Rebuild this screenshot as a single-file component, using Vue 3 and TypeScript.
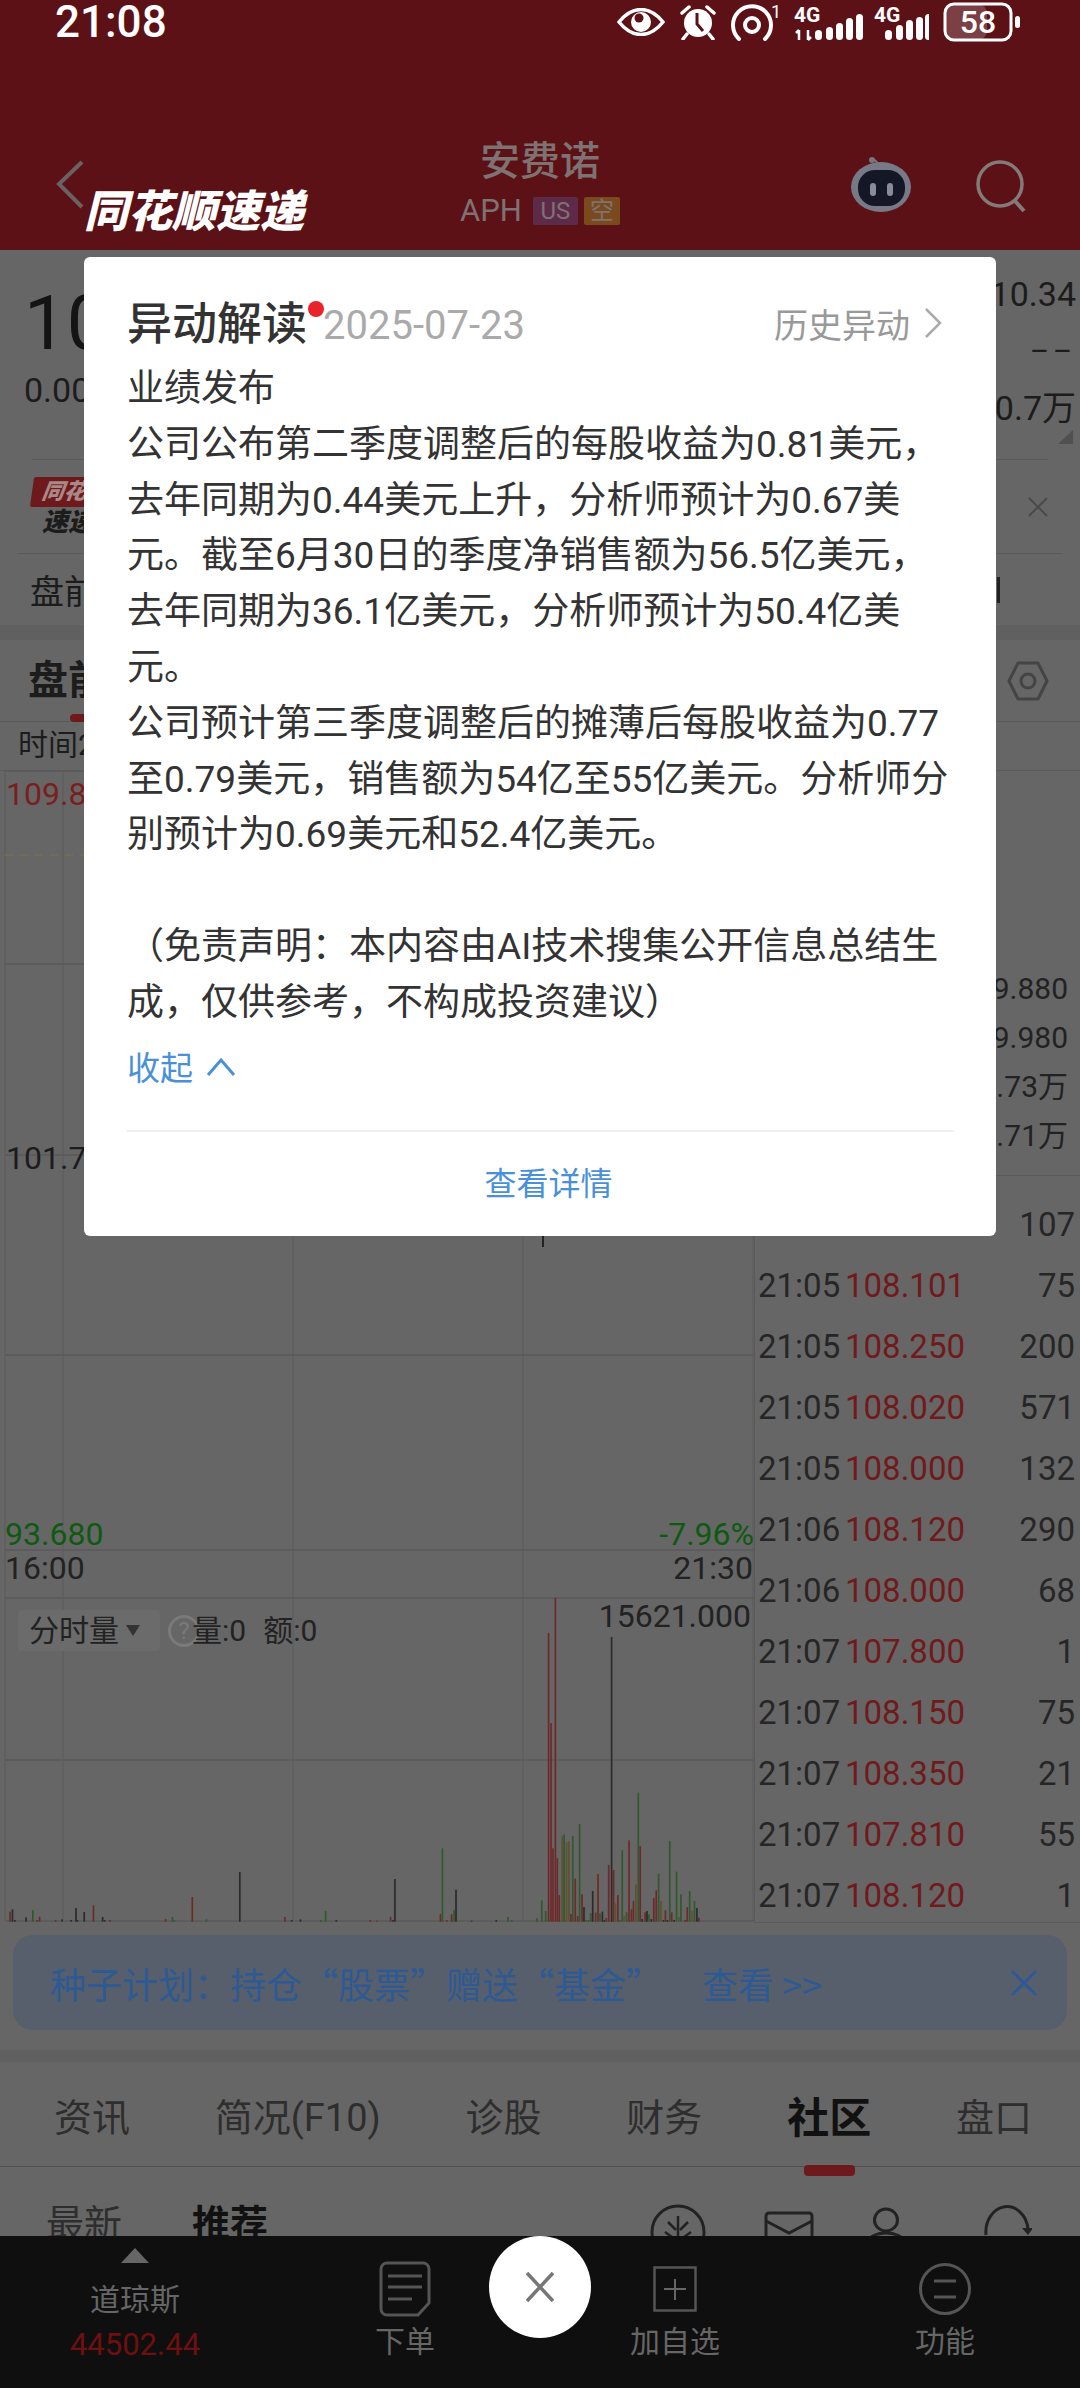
<template>
  <div class="screen">
    <header class="top">
      <div class="status">
        <span class="clock">21:08</span>
        <div class="status-icons">
          <svg width="48" height="28" viewBox="0 0 48 28">
            <path d="M2 14C10 4 17 1.500 24 1.500S38 4 46 14C38 24 31 26.500 24 26.500S10 24 2 14z" fill="none" stroke="#fff" stroke-width="3.500" />
            <circle cx="24" cy="14" r="10" fill="#fff" />
            <circle cx="22" cy="10" r="4.500" fill="#5c1116" />
          </svg>
          <svg width="38" height="36" viewBox="0 0 38 36">
            <circle cx="19" cy="19" r="14" fill="#fff" />
            <path d="M18 9v11l6 7" fill="none" stroke="#5c1116" stroke-width="3" />
            <path d="M3 9l7-6M35 9l-7-6M8 30l-4 5M30 30l4 5" stroke="#fff" stroke-width="3.500" stroke-linecap="round" />
          </svg>
          <svg width="49" height="38" viewBox="0 0 49 38">
            <path d="M8 36A19 19 0 1 1 34 36" fill="none" stroke="#fff" stroke-width="4" stroke-linecap="round" />
            <circle cx="21" cy="22" r="7" fill="none" stroke="#fff" stroke-width="4" />
            <text x="40" y="15" class="sv-small">1</text>
          </svg>
          <svg width="135" height="40" viewBox="0 0 135 40">
            <text x="0" y="20" class="sv-net">4G</text>
            <path d="M5 28v10M2 31l3-3M14 28v10M14 38l3-3" fill="none" stroke="#fff" stroke-width="2.500" />
            <rect v-for="b in signalA" :key="'a' + b.x" :x="b.x" :y="38 - b.h" width="7" :height="b.h" rx="3.500" fill="#fff" />
            <text x="80" y="20" class="sv-net">4G</text>
            <rect v-for="b in signalB" :key="'b' + b.x" :x="b.x" :y="38 - b.h" width="7" :height="b.h" rx="3.500" fill="#fff" />
          </svg>
          <svg width="78" height="40" viewBox="0 0 78 40">
            <rect x="2" y="2" width="42" height="36" rx="9" fill="#fff" fill-opacity="0.2" />
            <rect x="2" y="2" width="66" height="36" rx="9" fill="none" stroke="#fff" stroke-width="3" />
            <text x="35" y="31" text-anchor="middle" class="sv-batt">58</text>
            <rect x="72" y="14" width="5" height="12" rx="2.500" fill="#fff" />
          </svg>
        </div>
      </div>
      <div class="nav">
        <svg class="back" width="30" height="50" viewBox="0 0 30 50">
          <path d="M27 2L4 24l23 23" fill="none" stroke="#6a6262" stroke-width="4" />
        </svg>
        <div class="stock">
          <div class="stock-name">安费诺</div>
          <div class="stock-code">
            <span>APH</span>
            <span class="tag tag-us">US</span>
            <span class="tag tag-short">空</span>
          </div>
        </div>
        <div class="nav-right">
          <svg class="robot" width="62" height="58" viewBox="0 0 62 58">
            <path d="M28 8c-1-4-4-6-6-5" fill="none" stroke="#777" stroke-width="2" />
            <circle cx="22" cy="3" r="3" fill="#777" />
            <ellipse cx="31" cy="30" rx="30" ry="25" fill="#777a86" />
            <rect x="8" y="13" width="47" height="36" rx="17" fill="#141826" />
            <rect x="20" y="26" width="6" height="13" rx="3" fill="#8a8d97" />
            <rect x="37" y="26" width="6" height="13" rx="3" fill="#8a8d97" />
          </svg>
          <svg width="54" height="54" viewBox="0 0 54 54">
            <circle cx="24" cy="24" r="22" fill="none" stroke="#857a7a" stroke-width="3.500" />
            <path d="M39 41l9 10" stroke="#857a7a" stroke-width="4" />
          </svg>
        </div>
      </div>
    </header>

    <section class="quote">
      <div class="quote-left">
        <div class="price-big">108.12</div>
        <div class="price-sub">0.000 0.00%</div>
      </div>
      <div class="quote-right">
        <div>110.34</div>
        <div class="quote-dash">––</div>
        <div>10.7万</div>
        <svg class="corner" width="15" height="14" viewBox="0 0 15 14"><path d="M15 0v14H0z" fill="#505050" /></svg>
      </div>
    </section>

    <section class="ad">
      <div class="ad-logo">
        <span class="ad-flag">同花顺</span>
        <span class="ad-name">速递</span>
      </div>
      <svg width="20" height="20" viewBox="0 0 20 20"><path d="M1 1l18 18M19 1L1 19" stroke="#4a4a4a" stroke-width="2" /></svg>
    </section>

    <section class="pre">
      <span>盘前交易</span>
      <i class="pre-bar"></i>
    </section>

    <div class="band"></div>

    <section class="chart-tabs">
      <span class="chart-tab">盘前分时</span>
      <svg width="42" height="40" viewBox="0 0 42 40">
        <path d="M11 2h20l9 18-9 18H11L2 20z" fill="none" stroke="#444" stroke-width="3" stroke-linejoin="round" />
        <circle cx="21" cy="20" r="7" fill="none" stroke="#444" stroke-width="3" />
      </svg>
    </section>

    <div class="time-bar">时间2025-07-23</div>

    <section class="main">
      <div class="chart">
        <svg class="chart-svg" width="754" height="1152" viewBox="0 0 754 1152">
          <line v-for="x in gridX" :key="'x' + x" :x1="x" y1="0" :x2="x" y2="1150" stroke="#5a5a5a" />
          <line v-for="y in gridY" :key="'y' + y" x1="5" :y1="y" x2="754" :y2="y" stroke="#5a5a5a" stroke-width="1.500" />
          <line x1="5" y1="84" x2="754" y2="84" stroke="#7b6c55" stroke-width="1.500" stroke-dasharray="8 7" />
          <line x1="543" y1="450" x2="543" y2="476" stroke="#222" stroke-width="2" />
          <rect v-for="(b, i) in bars" :key="i" :x="b.x" :y="b.y" width="1.700" :height="b.h" :fill="barColors[b.c]" />
        </svg>
        <span class="lbl lbl-high">109.880</span>
        <span class="lbl lbl-mid">101.780</span>
        <span class="lbl lbl-low">93.680</span>
        <span class="lbl lbl-pct">-7.96%</span>
        <span class="lbl lbl-start">16:00</span>
        <span class="lbl lbl-end">21:30</span>
        <span class="lbl lbl-max">15621.000</span>
        <div class="vol-head">
          <span class="vol-select">分时量<i class="vol-caret"></i></span>
          <span class="vol-help">?</span>
          <span>量:0</span>
          <span class="vol-amount">额:0</span>
        </div>
      </div>
      <div class="side">
        <div class="side-stats">
          <div>109.880</div>
          <div>109.980</div>
          <div>1.73万</div>
          <div>1.71万</div>
        </div>
        <div v-for="(r, i) in ticks" :key="i" class="tick">
          <span class="tick-time">{{ r.time }}</span>
          <span class="tick-price">{{ r.price }}</span>
          <span class="tick-qty">{{ r.qty }}</span>
        </div>
      </div>
    </section>

    <section class="banner">
      <span>种子计划：持仓“股票”赠送“基金”</span>
      <span class="banner-link">查看 &gt;&gt;</span>
      <svg class="banner-close" width="28" height="28" viewBox="0 0 28 28"><path d="M2 2l24 24M26 2L2 26" stroke="#2d5a94" stroke-width="3" /></svg>
    </section>

    <div class="band band-low"></div>

    <nav class="tabs">
      <span v-for="t in tabs" :key="t" class="tab" :class="{ active: t === '社区' }">{{ t }}</span>
    </nav>

    <section class="sub">
      <span class="sub-tab">最新</span>
      <span class="sub-tab sub-active">推荐</span>
      <svg class="sub-icons" width="382" height="64" viewBox="0 0 382 64">
        <circle cx="28" cy="28" r="26" fill="none" stroke="#222" stroke-width="3" />
        <path d="M28 12v36M18 18l8 8M15 28l11 8M38 18l-8 8M41 28l-11 8" fill="none" stroke="#222" stroke-width="2.500" />
        <rect x="116" y="9" width="46" height="50" rx="3" fill="none" stroke="#222" stroke-width="3" />
        <path d="M116 17l23 12 23-12" fill="none" stroke="#222" stroke-width="3" />
        <ellipse cx="236" cy="16" rx="11.500" ry="11" fill="none" stroke="#222" stroke-width="3" />
        <path d="M218 38c2-12 34-12 36 0" fill="none" stroke="#222" stroke-width="3" />
        <path d="M336 31A20 24 0 1 1 378 25" fill="none" stroke="#222" stroke-width="3" />
        <path d="M372 24h11l-5 7z" fill="#222" />
      </svg>
    </section>

    <footer class="bar">
      <div class="bar-item">
        <svg class="index-arrow" width="28" height="15" viewBox="0 0 28 15"><path d="M14 0l14 15H0z" fill="#666" /></svg>
        <span class="index-name">道琼斯</span>
        <span class="index-value">44502.44</span>
      </div>
      <div class="bar-item">
        <svg width="52" height="56" viewBox="0 0 52 56">
          <path d="M8 2h36a6 6 0 0 1 6 6v34l-11 12H8a6 6 0 0 1-6-6V8a6 6 0 0 1 6-6z" fill="none" stroke="#555" stroke-width="3" />
          <path d="M9 15h34M9 26h34M9 38h24" stroke="#555" stroke-width="3" />
        </svg>
        <span class="bar-label">下单</span>
      </div>
      <div class="bar-item">
        <svg width="56" height="56" viewBox="0 0 56 56">
          <rect x="7.500" y="6.500" width="41" height="43" fill="none" stroke="#555" stroke-width="2.500" />
          <path d="M28 18v21M17 28h22" stroke="#666" stroke-width="2" />
        </svg>
        <span class="bar-label">加自选</span>
      </div>
      <div class="bar-item">
        <svg width="56" height="56" viewBox="0 0 56 56">
          <circle cx="28" cy="28" r="24.500" fill="none" stroke="#555" stroke-width="3" />
          <path d="M17 20h22M17 36h22" stroke="#555" stroke-width="3" />
        </svg>
        <span class="bar-label">功能</span>
      </div>
    </footer>

    <div class="logo">同花顺速递</div>

    <div class="modal">
      <div class="modal-head">
        <span class="modal-title">异动解读<i class="modal-dot"></i></span>
        <span class="modal-date">2025-07-23</span>
        <span class="modal-history">
          历史异动
          <svg width="18" height="32" viewBox="0 0 18 32"><path d="M2 2l14 14L2 30" fill="none" stroke="#aaa" stroke-width="2.500" /></svg>
        </span>
      </div>
      <div class="modal-body">
        <div v-for="(line, i) in lines" :key="i" class="modal-line">{{ line || '\u00a0' }}</div>
      </div>
      <div class="modal-fold">
        收起
        <svg width="30" height="22" viewBox="0 0 30 22"><path d="M2 20L15 5l13 15" fill="none" stroke="#4a90d9" stroke-width="3" /></svg>
      </div>
      <div class="modal-foot">查看详情</div>
    </div>

    <button class="close-btn" type="button">
      <svg width="30" height="32" viewBox="0 0 30 32"><path d="M2 2l26 28M28 2L2 30" stroke="#777" stroke-width="3.500" /></svg>
    </button>
  </div>
</template>

<script setup lang="ts">
interface SignalBar {
  x: number
  h: number
}

interface Tick {
  time: string
  price: string
  qty: number
}

type BarColor = 'r' | 'g' | 'k' | 'o'

const signalA: SignalBar[] = [
  { x: 21, h: 10 },
  { x: 32, h: 13 },
  { x: 42, h: 17 },
  { x: 52, h: 22 },
  { x: 62, h: 26 }
]
const signalB: SignalBar[] = [
  { x: 91, h: 10 },
  { x: 102, h: 15 },
  { x: 112, h: 20 },
  { x: 122, h: 23 },
  { x: 131, h: 26 }
]

const gridX = [5, 63, 293, 523, 753]
const gridY = [0, 193, 384, 584, 779, 827, 989, 1150]

const barColors: Record<BarColor, string> = {
  r: '#6e2a2a',
  g: '#32592e',
  k: '#2c2c2c',
  o: '#5e5230'
}

// x and top as read off the zoomed crop of the volume area
const rawBars: [number, number, BarColor][] = [
  [19, 395, 'r'], [24, 388, 'k'], [29, 420, 'k'], [52, 412, 'k'], [66, 390, 'g'], [75, 420, 'r'], [80, 410, 'r'],
  [113, 420, 'r'], [126, 418, 'k'], [145, 420, 'k'], [155, 384, 'k'], [158, 420, 'k'], [172, 396, 'k'], [191, 376, 'r'],
  [210, 411, 'k'], [214, 420, 'k'], [225, 420, 'r'], [340, 417, 'r'], [354, 411, 'g'], [358, 420, 'g'], [395, 351, 'r'],
  [424, 418, 'g'], [493, 276, 'k'], [586, 411, 'r'], [600, 420, 'k'], [618, 418, 'k'], [660, 420, 'g'], [670, 393, 'g'],
  [692, 420, 'k'], [762, 420, 'r'], [776, 422, 'r'], [804, 411, 'r'], [809, 420, 'k'], [813, 297, 'k'], [907, 402, 'r'],
  [911, 205, 'g'], [920, 420, 'r'], [930, 403, 'r'], [935, 390, 'g'], [939, 329, 'k'], [971, 422, 'k'], [1022, 420, 'k'],
  [1046, 411, 'g'], [1054, 420, 'g'], [1106, 414, 'g'], [1116, 361, 'g'], [1124, 393, 'g'],
  [1130, -441, 'r'], [1135, -171, 'r'], [1139, 205, 'r'], [1144, -546, 'r'], [1148, 235, 'r'], [1152, 345, 'r'],
  [1158, 167, 'o'], [1162, 163, 'g'], [1167, 187, 'o'], [1172, 183, 'o'], [1176, 402, 'r'], [1180, 168, 'g'],
  [1185, 296, 'r'], [1190, 408, 'r'], [1194, 132, 'g'], [1199, 343, 'r'], [1203, 381, 'k'], [1208, 420, 'g'],
  [1213, 420, 'g'], [1217, 400, 'g'], [1221, 333, 'k'], [1227, 398, 'r'], [1232, 282, 'r'], [1236, 400, 'g'],
  [1241, 395, 'k'], [1245, 420, 'k'], [1249, 414, 'r'], [1254, 255, 'r'], [1260, -429, 'k'], [1264, 270, 'r'],
  [1268, 370, 'o'], [1273, 345, 'r'], [1278, 420, 'g'], [1282, 211, 'g'], [1286, 408, 'o'], [1291, 397, 'g'],
  [1296, 181, 'r'], [1301, 388, 'r'], [1305, 363, 'r'], [1310, 313, 'o'], [1315, 38, 'g'], [1319, 198, 'r'],
  [1323, 417, 'k'], [1329, 397, 'r'], [1333, 393, 'k'], [1337, 403, 'g'], [1342, 417, 'k'], [1347, 354, 'r'],
  [1352, 331, 'r'], [1357, 281, 'g'], [1362, 363, 'o'], [1367, 420, 'k'], [1371, 391, 'r'], [1375, 420, 'k'],
  [1380, 183, 'g'], [1384, 397, 'r'], [1389, 420, 'k'], [1394, 275, 'g'], [1399, 411, 'o'], [1403, 343, 'g'],
  [1412, 420, 'r'], [1416, 381, 'r'], [1421, 333, 'g'], [1426, 393, 'o'], [1431, 363, 'g'], [1436, 384, 'k'],
  [1440, 413, 'r']
]

const bars = rawBars.map(([zx, ztop, c]) => {
  const top = 1780 + ztop / 3
  return { x: zx / 2.063, y: top - 771, h: 1921.7 - top, c }
})

const ticks: Tick[] = [
  { time: '21:04', price: '108.100', qty: 107 },
  { time: '21:05', price: '108.101', qty: 75 },
  { time: '21:05', price: '108.250', qty: 200 },
  { time: '21:05', price: '108.020', qty: 571 },
  { time: '21:05', price: '108.000', qty: 132 },
  { time: '21:06', price: '108.120', qty: 290 },
  { time: '21:06', price: '108.000', qty: 68 },
  { time: '21:07', price: '107.800', qty: 1 },
  { time: '21:07', price: '108.150', qty: 75 },
  { time: '21:07', price: '108.350', qty: 21 },
  { time: '21:07', price: '107.810', qty: 55 },
  { time: '21:07', price: '108.120', qty: 1 }
]

const tabs = ['资讯', '简况(F10)', '诊股', '财务', '社区', '盘口']

const lines = [
  '业绩发布',
  '公司公布第二季度调整后的每股收益为0.81美元，',
  '去年同期为0.44美元上升，分析师预计为0.67美',
  '元。截至6月30日的季度净销售额为56.5亿美元，',
  '去年同期为36.1亿美元，分析师预计为50.4亿美',
  '元。',
  '公司预计第三季度调整后的摊薄后每股收益为0.77',
  '至0.79美元，销售额为54亿至55亿美元。分析师分',
  '别预计为0.69美元和52.4亿美元。',
  '',
  '（免责声明：本内容由AI技术搜集公开信息总结生',
  '成，仅供参考，不构成投资建议）'
]
</script>

<style scoped>
.screen {
  position: relative;
  width: 1080px;
  height: 2388px;
  overflow: hidden;
  background: #666;
  color: #1c1c1c;
  font-family: Roboto, "Noto Sans CJK SC", sans-serif;
}

.top {
  height: 250px;
  background: #5c1116;
}

.status {
  display: flex;
  align-items: center;
  justify-content: space-between;
  height: 44px;
  padding: 0 59px 0 55px;
  color: #fff;
}

.clock {
  font-size: 44px;
  font-weight: 500;
  line-height: 44px;
}

.status-icons {
  display: flex;
  align-items: center;
  gap: 14px;
}

.sv-small {
  fill: #fff;
  font-size: 18px;
  font-family: Roboto, sans-serif;
}

.sv-net {
  fill: #fff;
  font-size: 21px;
  font-weight: 700;
  font-family: Roboto, sans-serif;
}

.sv-batt {
  fill: #fff;
  font-size: 32px;
  font-weight: 500;
  font-family: Roboto, sans-serif;
}

.nav {
  display: grid;
  grid-template-columns: 1fr auto 1fr;
  align-items: start;
  height: 206px;
  padding-top: 96px;
  box-sizing: border-box;
}

.back {
  margin: 20px 0 0 55px;
}

.stock {
  display: flex;
  flex-direction: column;
  align-items: center;
}

.stock-name {
  font-size: 40px;
  line-height: 44px;
  font-weight: 500;
  color: #7e7272;
}

.stock-code {
  display: flex;
  align-items: center;
  gap: 6px;
  margin-top: 12px;
  font-size: 31px;
  line-height: 30px;
  color: #7e7272;
}

.tag {
  width: 36px;
  height: 28px;
  font-size: 24px;
  line-height: 28px;
  text-align: center;
  border-radius: 2px;
}

.tag-us {
  width: 45px;
  margin-left: 5px;
  background: #5e2a4a;
}

.tag-short {
  background: #7a4a1c;
}

.nav-right {
  display: flex;
  align-items: flex-start;
  gap: 64px;
  justify-content: flex-end;
  padding-right: 50px;
  margin-top: 20px;
}

.robot {
  margin-top: -3px;
}

.quote {
  display: flex;
  justify-content: space-between;
  height: 209px;
}

.quote-left {
  padding: 28px 0 0 24px;
}

.price-big {
  font-size: 76px;
  line-height: 90px;
  color: #141414;
}

.price-sub {
  font-size: 34px;
  line-height: 44px;
}

.quote-right {
  padding: 16px 4px 0 0;
  font-size: 34px;
  line-height: 57px;
  text-align: right;
}

.quote-dash {
  font-size: 29px;
  letter-spacing: 4px;
}

.corner {
  display: block;
  margin: -7px 3px 0 auto;
}

.ad {
  display: flex;
  align-items: center;
  justify-content: space-between;
  height: 94px;
  box-sizing: border-box;
  margin: 0 32px;
  border-top: 1px solid #5a5a5a;
}

.ad-logo {
  display: flex;
  flex-direction: column;
  font-style: italic;
  font-weight: 900;
  line-height: 30px;
  font-size: 22px;
}

.ad-flag {
  padding: 0 10px;
  background: #6e1a1c;
  color: #a88;
  border-radius: 2px;
  transform: skewX(-8deg);
}

.ad-name {
  padding-left: 10px;
  font-size: 26px;
}

.pre {
  display: flex;
  align-items: center;
  justify-content: space-between;
  height: 72px;
  box-sizing: border-box;
  margin: 0 18px;
  padding: 0 62px 0 12px;
  border-top: 1px solid #5a5a5a;
  font-size: 34px;
}

.pre-bar {
  width: 3px;
  height: 26px;
  background: #222;
}

.band {
  height: 15px;
  background: #606060;
}

.band-low {
  height: 12px;
  margin-top: 20px;
}

.chart-tabs {
  display: flex;
  align-items: center;
  justify-content: space-between;
  height: 82px;
  box-sizing: border-box;
  padding: 0 31px 0 28px;
  border-bottom: 1px solid #5a5a5a;
}

.chart-tab {
  position: relative;
  font-size: 40px;
  font-weight: 700;
  line-height: 82px;
}

.chart-tab::after {
  content: "";
  position: absolute;
  left: 42px;
  bottom: 0;
  width: 50px;
  height: 8px;
  border-radius: 4px;
  background: #6e1a1c;
}

.time-bar {
  height: 49px;
  box-sizing: border-box;
  padding-left: 18px;
  border-bottom: 1px solid #5a5a5a;
  font-size: 30px;
  line-height: 46px;
}

.main {
  display: flex;
  height: 1152px;
}

.chart {
  position: relative;
  flex: 0 0 754px;
}

.chart-svg {
  display: block;
}

.lbl {
  position: absolute;
  font-size: 32px;
  line-height: 36px;
  white-space: nowrap;
}

.lbl-high {
  left: 6px;
  top: 5px;
  color: #7a1e20;
}

.lbl-mid {
  left: 6px;
  top: 369px;
}

.lbl-low {
  left: 5px;
  top: 745px;
  color: #0e5a10;
}

.lbl-pct {
  right: 0;
  top: 745px;
  color: #0e5a10;
}

.lbl-start {
  left: 5px;
  top: 779px;
  color: #222;
}

.lbl-end {
  right: 1px;
  top: 779px;
  color: #222;
}

.lbl-max {
  right: 3px;
  top: 827px;
  color: #222;
}

.vol-head {
  position: absolute;
  left: 18px;
  top: 839px;
  display: flex;
  align-items: center;
  font-size: 30px;
  line-height: 41px;
  color: #222;
}

.vol-select {
  display: flex;
  align-items: center;
  width: 142px;
  height: 41px;
  box-sizing: border-box;
  padding-left: 11px;
  border-radius: 4px;
  background: #6b6b6b;
}

.vol-caret {
  margin-left: 7px;
  border: 7px solid transparent;
  border-top: 11px solid #333;
  border-bottom: 0;
}

.vol-help {
  width: 26px;
  height: 26px;
  margin: 0 -8px 0 8px;
  border: 3px solid #7a7a7a;
  border-radius: 50%;
  font-size: 24px;
  line-height: 26px;
  text-align: center;
  color: #7a7a7a;
}

.vol-amount {
  margin-left: 17px;
}

.side {
  flex: 1;
  height: 1152px;
  overflow: hidden;
  box-sizing: border-box;
  border-left: 1px solid #5a5a5a;
  border-bottom: 1px solid #5a5a5a;
}

.side-stats {
  padding: 193px 12px 15px 0;
  border-bottom: 1px solid #5a5a5a;
  margin-bottom: 18px;
  font-size: 30px;
  line-height: 49px;
  text-align: right;
  color: #222;
}

.tick {
  display: flex;
  align-items: center;
  height: 61px;
  padding: 0 5px 0 3px;
  font-size: 33px;
  color: #262626;
}

.tick-time {
  width: 87px;
}

.tick-price {
  color: #701a1c;
}

.tick-qty {
  margin-left: auto;
}

.banner {
  display: flex;
  align-items: center;
  height: 95px;
  margin: 12px 13px 0;
  padding: 0 29px 0 37px;
  border-radius: 20px;
  background: #565f6b;
  color: #2d5a94;
  font-family: "Noto Sans CJK SC", sans-serif;
  font-size: 36px;
}

.banner-link {
  margin-left: 40px;
}

.banner-close {
  margin-left: auto;
}

.tabs {
  display: flex;
  align-items: center;
  justify-content: space-between;
  height: 105px;
  box-sizing: border-box;
  padding: 0 48px 0 54px;
  border-bottom: 1px solid #4e4e4e;
  font-size: 38px;
  color: #2e2e2e;
}

.tab {
  position: relative;
}

.tab.active {
  font-size: 42px;
  font-weight: 700;
  color: #111;
}

.tab.active::after {
  content: "";
  position: absolute;
  left: 17px;
  bottom: -31px;
  width: 51px;
  height: 11px;
  border-radius: 4px;
  background: #6e1a1c;
}

.sub {
  display: flex;
  align-items: flex-start;
  height: 69px;
  overflow: hidden;
  padding: 31px 0 0 46px;
  box-sizing: border-box;
  font-size: 38px;
  line-height: 52px;
  color: #2e2e2e;
}

.sub-active {
  margin-left: 70px;
  font-weight: 700;
  color: #111;
}

.sub-icons {
  margin: 6px 48px 0 auto;
}

.bar {
  display: grid;
  grid-template-columns: repeat(4, 270px);
  height: 152px;
  background: #0f0f0f;
  color: #666;
}

.bar-item {
  display: flex;
  flex-direction: column;
  align-items: center;
  padding-top: 25px;
}

.bar-label {
  font-size: 30px;
  line-height: 50px;
}

.index-arrow {
  margin-top: -13px;
}

.index-name {
  margin-top: 15px;
  font-size: 30px;
  line-height: 44px;
}

.index-value {
  font-size: 31px;
  line-height: 46px;
  color: #6e1010;
}

.logo {
  position: absolute;
  left: 84px;
  top: 178px;
  font-family: "Noto Sans CJK SC", sans-serif;
  font-size: 44px;
  line-height: 60px;
  font-weight: 900;
  font-style: italic;
  color: #fff;
}

.modal {
  position: absolute;
  left: 84px;
  top: 257px;
  width: 912px;
  height: 979px;
  box-sizing: border-box;
  padding: 38px 42px 0 43px;
  border-radius: 6px;
  background: #fff;
  color: #333;
}

.modal-head {
  display: flex;
  align-items: center;
  height: 60px;
  margin-bottom: 6px;
}

.modal-title {
  position: relative;
  font-size: 45px;
  font-weight: 500;
  line-height: 60px;
}

.modal-dot {
  position: absolute;
  right: -17px;
  top: 6px;
  width: 16px;
  height: 16px;
  border-radius: 50%;
  background: #e8232a;
}

.modal-date {
  margin-left: 16px;
  font-size: 40px;
  color: #aaa;
}

.modal-history {
  display: flex;
  align-items: center;
  gap: 14px;
  margin-left: auto;
  margin-top: -4px;
  padding-right: 12px;
  font-size: 34px;
  color: #999;
}

.modal-body {
  font-size: 37px;
  line-height: 55.800px;
}

.modal-line {
  white-space: nowrap;
}

.modal-fold {
  display: flex;
  align-items: center;
  gap: 13px;
  height: 50px;
  margin-top: 10px;
  font-size: 33px;
  color: #4a90d9;
}

.modal-foot {
  margin-top: 39px;
  padding-left: 16px;
  border-top: 2px solid #f0f0f0;
  font-size: 32px;
  line-height: 104px;
  text-align: center;
  color: #4a90d9;
}

.close-btn {
  position: absolute;
  left: 489px;
  top: 2236px;
  display: flex;
  align-items: center;
  justify-content: center;
  width: 102px;
  height: 102px;
  padding: 0;
  border: 0;
  border-radius: 50%;
  background: #fff;
}
</style>
